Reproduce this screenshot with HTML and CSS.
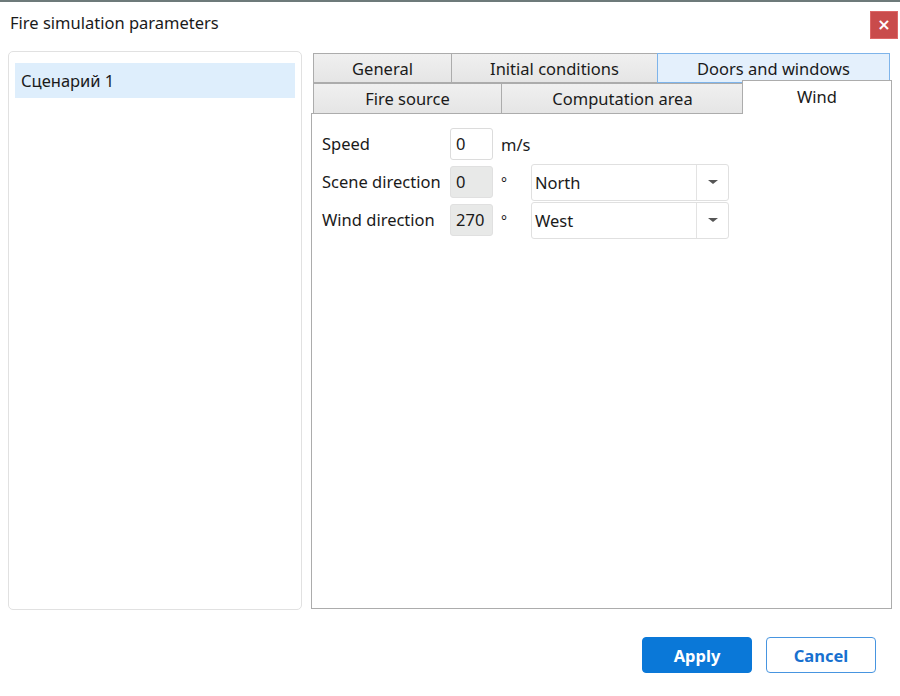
FILE: index.html
```html
<!DOCTYPE html>
<html>
<head>
<meta charset="utf-8">
<link rel="stylesheet" href="styles.css">
</head>
<body>
<div class="window">
  <div class="titlebar">
    <div class="title">Fire simulation parameters</div>
    <button class="close">×</button>
  </div>
  <div class="main">
    <div class="scenarios">
      <div class="scenario selected">Сценарий 1</div>
    </div>
    <div class="tabs">
      <div class="tabrow row1">
        <div class="tab w-general">General</div>
        <div class="tab w-initial">Initial conditions</div>
        <div class="tab w-doors hover">Doors and windows</div>
      </div>
      <div class="tabrow row2">
        <div class="tab w-fire">Fire source</div>
        <div class="tab w-comp">Computation area</div>
        <div class="tab w-wind active">Wind</div>
      </div>
      <div class="panel">
        <div class="form">
          <div class="lbl">Speed</div>
          <div class="field">0</div>
          <div class="unit">m/s</div>
          <div></div>

          <div class="lbl">Scene direction</div>
          <div class="field ro">0</div>
          <div class="unit deg">°</div>
          <div class="combo"><span class="ctext">North</span><span class="carrow"><i></i></span></div>

          <div class="lbl">Wind direction</div>
          <div class="field ro">270</div>
          <div class="unit deg">°</div>
          <div class="combo"><span class="ctext">West</span><span class="carrow"><i></i></span></div>
        </div>
      </div>
    </div>
  </div>
  <div class="footer">
    <button class="btn primary">Apply</button>
    <button class="btn secondary">Cancel</button>
  </div>
</div>
</body>
</html>
```

FILE: styles.css
```css
* { box-sizing: border-box; }
html, body { margin: 0; padding: 0; background: #fff; }
body {
  font-family: "Noto Sans", "Open Sans", sans-serif;
  font-size: 16.5px;
  color: #1a1a1a;
  width: 900px;
  height: 696px;
  overflow: hidden;
}
.window {
  border-top: 2px solid #6d7a7a;
  height: 696px;
  display: flex;
  flex-direction: column;
}
.titlebar {
  height: 49px;
  display: flex;
  align-items: flex-start;
  justify-content: space-between;
  padding: 8px 2px 0 10px;
}
.title { font-size: 16.5px; line-height: 24px; padding-top: 1px; }
.close {
  width: 28px; height: 28px;
  background: #c94b4b;
  border: 1px solid #d66;
  color: #fff;
  font-size: 16px;
  line-height: 24px;
  padding: 0;
  margin-top: 1px;
  font-family: "DejaVu Sans", sans-serif;
  font-weight: bold;
}
.main {
  display: flex;
  padding: 0 8px 0 8px;
  height: 560px;
}
.scenarios {
  width: 294px;
  height: 559px;
  border: 1px solid #e1e1e1;
  border-radius: 5px;
  padding: 11px 6px;
}
.scenario {
  height: 35px;
  padding-left: 6px;
  padding-top: 1px;
  line-height: 34px;
}
.scenario.selected { background: #deeefc; }
.tabs {
  width: 581px;
  margin-left: 9px;
  margin-top: 2px;
  display: flex;
  flex-direction: column;
}
.tabrow {
  display: flex;
  padding-left: 2px;
  height: 30px;
}
.tab {
  height: 30px;
  border: 1px solid #acacac;
  border-right-width: 0;
  background: linear-gradient(#f0f0f0, #e5e5e5);
  text-align: center;
  line-height: 30px;
  font-size: 16.5px;
}
.tab:last-child { border-right-width: 1px; }
.tab.hover {
  background: #e4f0fc;
  border-color: #7eb4ea;
  border-left: 1px solid #7eb4ea;
}
.w-general { width: 138px; }
.w-initial { width: 206px; }
.w-doors { width: 233px; }
.w-fire { width: 188px; }
.w-comp { width: 242px; }
.row2 .tab { border-bottom: none; }
.tab.active {
  width: 150px;
  height: 34px;
  margin-top: -3px;
  background: #fff;
  border: 1px solid #acacac;
  border-bottom: none;
  position: relative;
  z-index: 2;
  line-height: 32px;
  margin-left: -1px;
}
.panel {
  height: 496px;
  border: 1px solid #acacac;
  background: #fff;
  padding: 11px 10px;
}
.form {
  display: grid;
  grid-template-columns: 128px 43px 38px 198px;
  grid-auto-rows: 38px;
  align-items: center;
}
.lbl { line-height: 24px; }
.field {
  height: 32px;
  border: 1px solid #dcdcdc;
  border-radius: 3px;
  padding-left: 5px;
  line-height: 30px;
  background: #fff;
}
.field.ro { background: #e8e9e8; border-color: #e0e0e0; }
.unit { padding-left: 8px; }
.deg { font-size: 14px; }
.combo {
  height: 37px;
  border: 1px solid #e0e0e0;
  border-radius: 3px;
  display: flex;
  align-items: center;
}
.ctext { flex: 1; padding-left: 3px; }
.carrow {
  width: 32px;
  height: 100%;
  border-left: 1px solid #e3e3e3;
  display: flex;
  align-items: center;
  justify-content: center;
}
.carrow i {
  width: 0; height: 0;
  border-left: 5px solid transparent;
  border-right: 5px solid transparent;
  border-top: 4px solid #555;
}
.footer {
  display: flex;
  justify-content: flex-end;
  gap: 14px;
  padding: 26px 24px 0 0;
}
.btn {
  width: 110px;
  height: 36px;
  border-radius: 4px;
  font-family: "Noto Sans", "Open Sans", sans-serif;
  font-size: 16.5px;
  font-weight: bold;
}
.primary { background: #0a78d8; color: #fff; border: 1px solid #0a78d8; }
.secondary { background: #fff; color: #1870cf; border: 1px solid #4895e0; }
```
